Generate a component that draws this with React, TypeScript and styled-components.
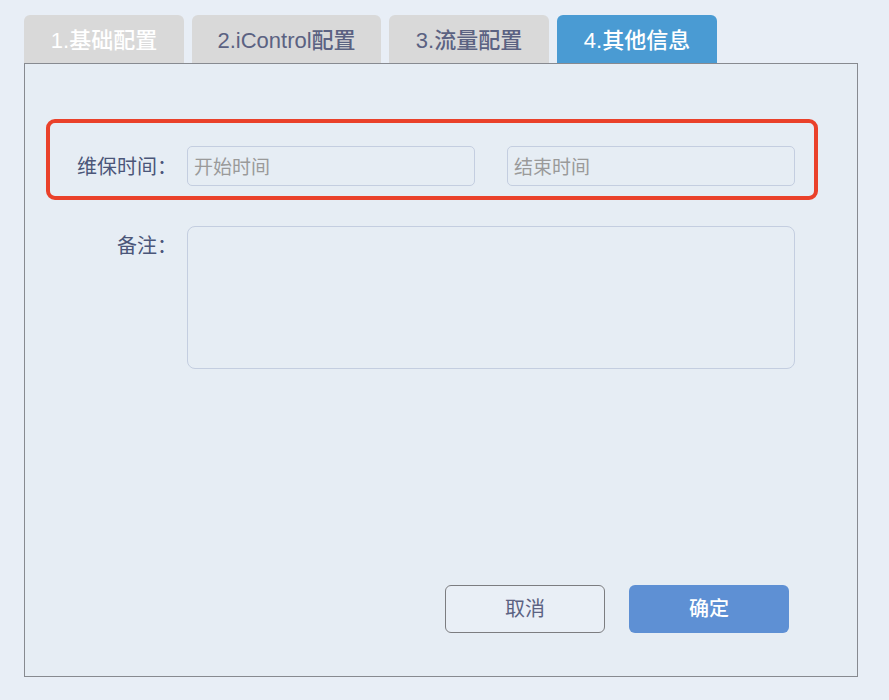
import React from "react";
import styled, { createGlobalStyle } from "styled-components";

const Global = createGlobalStyle`
  html, body { margin: 0; padding: 0; background: #e8eef6; }
  body {
    font-family: "Liberation Sans", "Noto Sans CJK SC", sans-serif;
    width: 889px; height: 700px; overflow: hidden;
  }
  * { box-sizing: border-box; }
`;

const Page = styled.div`
  padding: 15px 0 0 24px;
`;

const TabBar = styled.div`
  display: flex;
  gap: 8px;
  height: 48px;
`;

const Tab = styled.div<{ $w: number; $active?: boolean; $done?: boolean }>`
  width: ${(p) => p.$w}px;
  height: 48px;
  display: flex;
  align-items: center;
  justify-content: center;
  padding-bottom: 3px;
  border-radius: 6px 6px 0 0;
  font-size: 22px;
  font-weight: 500;
  background: ${(p) => (p.$active ? "#4a9bd3" : "#d9d9d9")};
  color: ${(p) => (p.$active || p.$done ? "#ffffff" : "#5b6282")};
`;

const Panel = styled.div`
  width: 834px;
  height: 614px;
  border: 1px solid #878a90;
  background: #e6edf4;
  padding: 82px 0 0 0;
  display: flex;
  flex-direction: column;
`;

const Row = styled.div<{ $top?: boolean }>`
  position: relative;
  display: flex;
  align-items: ${(p) => (p.$top ? "flex-start" : "center")};
  margin-bottom: 40px;
`;

const Label = styled.div<{ $top?: boolean }>`
  width: 152px;
  margin-right: 10px;
  text-align: right;
  font-family: "Noto Sans CJK SC", sans-serif;
  font-size: 20px;
  color: #4b5679;
  padding-top: ${(p) => (p.$top ? "4px" : "0")};
  padding-bottom: ${(p) => (p.$top ? "0" : "2px")};
`;

const Fields = styled.div`
  width: 608px;
  display: flex;
  justify-content: space-between;
`;

const DateInput = styled.input`
  width: 288px;
  height: 40px;
  border: 1px solid #c4cee0;
  border-radius: 5px;
  background: #e6edf4;
  padding: 0 6px 2px;
  font-family: "Noto Sans CJK SC", sans-serif;
  font-size: 19px;
  color: #333;
  outline: none;
  &::placeholder { color: #9a9a9a; }
`;

const Notes = styled.textarea`
  width: 608px;
  height: 143px;
  border: 1px solid #c4cee0;
  border-radius: 8px;
  background: #e6edf4;
  resize: none;
  outline: none;
  padding: 8px;
  font-family: "Noto Sans CJK SC", sans-serif;
  font-size: 18px;
`;

const Highlight = styled.div`
  position: absolute;
  top: -27px;
  bottom: -14px;
  left: 21px;
  right: 39px;
  border: 4px solid #ea412a;
  border-radius: 9px;
  pointer-events: none;
`;

const Footer = styled.div`
  margin-top: auto;
  display: flex;
  justify-content: flex-end;
  gap: 24px;
  padding: 0 68px 43px 0;
`;

const Button = styled.button<{ $primary?: boolean }>`
  width: 160px;
  height: 48px;
  padding: 0 0 3px;
  border-radius: 6px;
  font-family: "Noto Sans CJK SC", sans-serif;
  font-size: 20px;
  font-weight: ${(p) => (p.$primary ? 500 : 400)};
  cursor: pointer;
  border: ${(p) => (p.$primary ? "none" : "1px solid #7c7d80")};
  background: ${(p) => (p.$primary ? "#5e90d4" : "#e9eff6")};
  color: ${(p) => (p.$primary ? "#ffffff" : "#5b6282")};
`;

const tabs = [
  { label: "1.基础配置", w: 160, done: true },
  { label: "2.iControl配置", w: 189 },
  { label: "3.流量配置", w: 160 },
  { label: "4.其他信息", w: 160, active: true },
];

export default function App() {
  return (
    <Page>
      <Global />
      <TabBar>
        {tabs.map((t) => (
          <Tab key={t.label} $w={t.w} $active={t.active} $done={t.done}>
            {t.label}
          </Tab>
        ))}
      </TabBar>
      <Panel>
        <Row>
          <Label>维保时间：</Label>
          <Fields>
            <DateInput placeholder="开始时间" />
            <DateInput placeholder="结束时间" />
          </Fields>
          <Highlight />
        </Row>
        <Row $top>
          <Label $top>备注：</Label>
          <Notes />
        </Row>
        <Footer>
          <Button>取消</Button>
          <Button $primary>确定</Button>
        </Footer>
      </Panel>
    </Page>
  );
}
